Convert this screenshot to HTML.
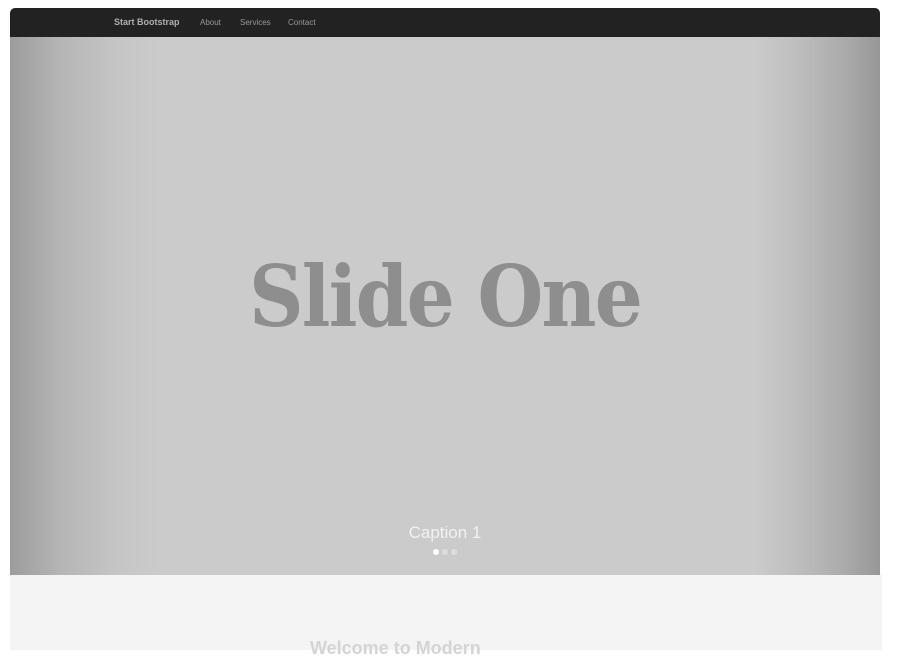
<!DOCTYPE html>
<html><head><style>
body{margin:0;background:#fff;width:900px;height:650px;overflow:hidden;font-family:"Liberation Sans",sans-serif;position:relative}
.nav{position:absolute;left:10px;top:8px;width:870px;height:29px;background:#222;border-radius:5px 5px 0 0}
.nav span{position:absolute;top:10px;color:#9a9a9a;font-size:8px}
.car{position:absolute;left:10px;top:37px;width:870px;height:538px;background:linear-gradient(to right,#9c9c9c 0px,#b5b5b5 50px,#c6c6c6 110px,#cbcbcb 150px,#cbcbcb 745px,#bdbdbd 790px,#a8a8a8 840px,#979797 870px)}
.big{position:absolute;left:0;width:870px;top:210px;text-align:center;font-family:"DejaVu Serif",serif;font-weight:bold;font-size:84px;color:#8e8e8e;letter-spacing:-2px;transform:scaleX(0.9)}
.cap{position:absolute;left:0;width:870px;top:486px;text-align:center;color:#f2f2f2;font-size:17px}
.dot{position:absolute;top:512px;width:6px;height:6px;border-radius:50%;background:#fff}
.bot{position:absolute;left:10px;top:575px;width:872px;height:75px;background:#f4f4f4}
.bt{position:absolute;left:310px;top:638px;color:#d4d4d4;font-size:18px;font-weight:bold}
.arr{position:absolute;top:290px;color:#bbb;font-size:14px}
</style></head><body>
<div class="nav">
<span style="left:104px;color:#b0b0b0;font-size:9px;top:9px;font-weight:bold">Start Bootstrap</span>
<span style="left:190px">About</span>
<span style="left:230px">Services</span>
<span style="left:278px">Contact</span>
</div>
<div class="car">
<div class="big">Slide One</div>
<div class="arr" style="left:58px">‹</div>
<div class="arr" style="left:795px">›</div>
<div class="cap">Caption 1</div>
<div class="dot" style="left:423px"></div>
<div class="dot" style="left:432px;background:#ddd"></div>
<div class="dot" style="left:441px;background:#ddd"></div>
</div>
<div class="bot"></div>
<div class="bt">Welcome to Modern</div>
</body></html>
